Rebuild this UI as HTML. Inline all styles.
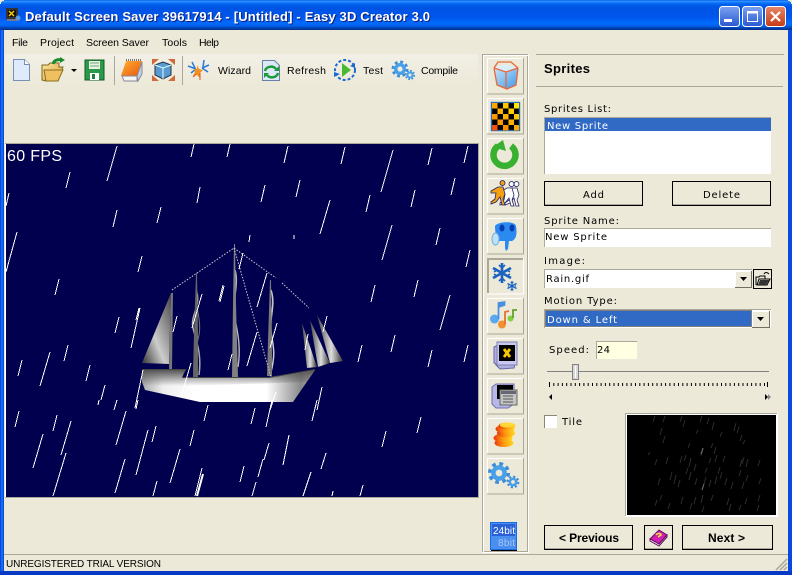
<!DOCTYPE html>
<html><head><meta charset="utf-8"><style>
html,body{margin:0;padding:0;width:792px;height:575px;overflow:hidden;background:#ece9d8}
svg{display:block;position:absolute;left:0;top:0}
text{font-family:"Liberation Sans",sans-serif;font-size:10.5px;fill:#000}
text.d{font-family:"DejaVu Sans",sans-serif;font-size:10px}
.b{font-weight:bold}
text.w{fill:#fff}
</style></head><body>
<svg width="792" height="575" viewBox="0 0 792 575" xmlns="http://www.w3.org/2000/svg">
<defs>
<linearGradient id="tb" x1="0" y1="0" x2="0" y2="1">
<stop offset="0" stop-color="#0058ee"/><stop offset=".04" stop-color="#3593ff"/><stop offset=".08" stop-color="#127dff"/><stop offset=".14" stop-color="#0262ee"/><stop offset=".24" stop-color="#0054e3"/><stop offset=".56" stop-color="#0055eb"/><stop offset=".76" stop-color="#026afe"/><stop offset=".86" stop-color="#0062ef"/><stop offset=".94" stop-color="#0040ab"/><stop offset="1" stop-color="#003092"/>
</linearGradient>
<linearGradient id="hull" x1="0" y1="0" x2="1" y2="0"><stop offset="0" stop-color="#aaa"/><stop offset=".12" stop-color="#eee"/><stop offset=".3" stop-color="#fff"/><stop offset=".72" stop-color="#fff"/><stop offset=".92" stop-color="#888"/><stop offset="1" stop-color="#bbb"/></linearGradient>
<linearGradient id="deck" x1="0" y1="0" x2="0" y2="1"><stop offset="0" stop-color="#555"/><stop offset="1" stop-color="#555" stop-opacity="0"/></linearGradient>
<linearGradient id="sl" x1="0" y1="1" x2="1" y2="0"><stop offset="0" stop-color="#333"/><stop offset=".4" stop-color="#ccc"/><stop offset="1" stop-color="#444"/></linearGradient>
<linearGradient id="sr" x1="0" y1="0" x2="1" y2="0"><stop offset="0" stop-color="#444"/><stop offset=".55" stop-color="#ddd"/><stop offset="1" stop-color="#333"/></linearGradient>
<linearGradient id="tool" x1="0" y1="0" x2="0" y2="1"><stop offset="0" stop-color="#f2f0e6"/><stop offset="1" stop-color="#ece9d8"/></linearGradient>
<linearGradient id="blu" x1="0" y1="0" x2="1" y2="1"><stop offset="0" stop-color="#c8e6fa"/><stop offset="1" stop-color="#3a96ea"/></linearGradient>
<linearGradient id="org" x1="0" y1="0" x2="1" y2="1"><stop offset="0" stop-color="#ffb030"/><stop offset="1" stop-color="#e85810"/></linearGradient>
<linearGradient id="coin" x1="0" y1="0" x2="1" y2="0"><stop offset="0" stop-color="#e83808"/><stop offset=".5" stop-color="#ff9a10"/><stop offset="1" stop-color="#ffd820"/></linearGradient>
<linearGradient id="btnb" x1="0" y1="0" x2="0" y2="1"><stop offset="0" stop-color="#7ba2f0"/><stop offset="1" stop-color="#2a58d0"/></linearGradient>
<linearGradient id="btnr" x1="0" y1="0" x2="0" y2="1"><stop offset="0" stop-color="#e8866a"/><stop offset="1" stop-color="#c43a12"/></linearGradient>
<linearGradient id="fol" x1="0" y1="0" x2="1" y2="1"><stop offset="0" stop-color="#ffe8a0"/><stop offset="1" stop-color="#d89830"/></linearGradient>
<g id="gear"><circle r="7" fill="none" stroke="#3a8ed8" stroke-width="3" stroke-dasharray="2.8 2.7"/><circle r="4.300" fill="none" stroke="#4aa0e8" stroke-width="3.400"/></g>
<g id="flake" stroke="#1a64c0" stroke-width="2.600" fill="none"><path d="M0-10V10M-9-5 9 5M-9 5 9-5"/><path stroke-width="1.600" d="M-3-8 0-5 3-8M-3 8 0 5 3 8M-8-1-5-3-8-5M8-1 5-3 8-5M-8 1-5 3-8 5M8 1 5 3 8 5"/></g>
<path id="man" d="M0 0a2.500 2.500 0 1 1 0 .1zM-2 4l5 0 2 7-2 5 2 6h-3l-2-8-4 5-5 2 0-2 4-3 1-6-5 0 0-2z"/>
</defs>

<!-- frame -->
<rect width="792" height="575" fill="#0a3cd0"/>
<rect x="0" y="0" width="792" height="30" fill="url(#tb)"/>
<path d="M0 0h4v1h-2v1h-1v2h-1zM792 0h-4v1h2v1h1v2h1z" fill="#ece9d8"/>
<rect x="0" y="30" width="4" height="545" fill="#0849df"/>
<rect x="1" y="30" width="2" height="545" fill="#166aee"/>
<rect x="788" y="30" width="4" height="545" fill="#0849df"/>
<rect x="0" y="571" width="792" height="4" fill="#0839c4"/>
<rect x="4" y="30" width="784" height="541" fill="#ece9d8"/>

<!-- title icon -->
<rect x="6" y="8" width="12" height="11" fill="#333"/><rect x="8" y="10" width="8" height="7" fill="#111"/>
<path d="M9 11l5 5M14 11l-5 5" stroke="#ffd000" stroke-width="1.400"/>
<rect x="7" y="19" width="12" height="2" fill="#778"/><circle cx="18" cy="18" r="2.500" fill="#5a9ae0"/>
<text x="26" y="22" class="b" style="font-size:13px;fill:#0f1e78" textLength="405" lengthAdjust="spacing">Default Screen Saver 39617914 - [Untitled] - Easy 3D Creator 3.0</text>
<text x="25" y="21" class="b w" style="font-size:13px" textLength="405" lengthAdjust="spacing">Default Screen Saver 39617914 - [Untitled] - Easy 3D Creator 3.0</text>

<!-- window buttons -->
<rect x="719.500" y="6.500" width="20" height="20" rx="3" fill="url(#btnb)" stroke="#fff"/>
<rect x="724" y="19" width="8" height="3" fill="#fff"/>
<rect x="742.500" y="6.500" width="20" height="20" rx="3" fill="url(#btnb)" stroke="#fff"/>
<rect x="747.500" y="12.500" width="10" height="9" fill="none" stroke="#fff"/><rect x="747" y="11" width="11" height="2.500" fill="#fff"/>
<rect x="765.500" y="6.500" width="20" height="20" rx="3" fill="url(#btnr)" stroke="#fff"/>
<path d="M771 12l9 9M780 12l-9 9" stroke="#fff" stroke-width="2.200"/>

<!-- menu -->
<text x="12" y="46" textLength="16" lengthAdjust="spacing">File</text>
<text x="40" y="46" textLength="34" lengthAdjust="spacing">Project</text>
<text x="86" y="46" textLength="63" lengthAdjust="spacing">Screen Saver</text>
<text x="162" y="46" textLength="25" lengthAdjust="spacing">Tools</text>
<text x="199" y="46" textLength="20" lengthAdjust="spacing">Help</text>

<!-- toolbar -->
<rect x="5" y="54" width="473" height="32" rx="2" fill="url(#tool)"/>
<rect x="114" y="56" width="1" height="29" fill="#aca899"/>
<rect x="182" y="56" width="1" height="29" fill="#aca899"/>
<!-- new -->
<path d="M13.500 59.500h11l5 5v16h-16z" fill="#dfeafc" stroke="#7890b8"/><path d="M24.500 59.500v5h5" fill="#fff" stroke="#7890b8"/>
<!-- open -->
<path d="M42 65h6l2-2h9v4l4 0-5 14H46l-4-1z" fill="url(#fol)" stroke="#7a6a20"/>
<path d="M44 70h19l-5 11H46z" fill="#f0c060" stroke="#8a7020"/>
<path d="M53 64c1-4 5-5 9-4" stroke="#1a8a30" stroke-width="3" fill="none"/><path d="M60 57l5 3-5 3z" fill="#1a8a30"/>
<path d="M71 69h6l-3 3z" fill="#000"/>
<!-- save -->
<rect x="85" y="60" width="19" height="20" fill="#2a9a4a" stroke="#105a24"/><rect x="89" y="61" width="11" height="8" fill="#e8f4e0"/><path d="M90 63h9M90 66h9" stroke="#70a880"/><rect x="90" y="73" width="9" height="7" fill="#fff"/><rect x="92" y="74" width="3" height="5" fill="#2a7a40"/>
<!-- book -->
<path d="M126 61h16l-5 15h-16z" fill="url(#org)"/><path d="M126 60h16" stroke="#777" stroke-dasharray="1 1" stroke-width="2"/><path d="M122 76h15v5h-13z" fill="#f4f4f4" stroke="#889"/><path d="M137 76l5-14v12l-4 7z" fill="#c8d0e4" stroke="#889"/>
<!-- cube tool -->
<path d="M152 59h7l-7 6zM175 59h-7l7 6zM152 81h7l-7-6zM175 81h-7l7-6z" fill="#d0683a"/><path d="M155 65l8-3 8 3v10l-8 4-8-4z" fill="#5a9ad0" stroke="#234"/><path d="M155 65l8 3 8-3M163 68v11" stroke="#dff" fill="none"/>
<!-- wizard -->
<g stroke="#2a7ad8" fill="none" stroke-width="1.500"><path d="M188 66l8 3M192 62l3 6M191 73l5-4"/><path d="M209 65l-7 3M204 60l-1 7M208 72l-6-4"/></g>
<path d="M197 65l2 4 4 1-3 3 0 5-3-3-4 1 2-4-1-3 3 0z" fill="#f09020"/>
<path d="M200 73v7M196 74l-3 3" stroke="#e05020"/>
<text x="218" y="74" textLength="33" lengthAdjust="spacing">Wizard</text>
<!-- refresh -->
<path d="M262.500 60.500h12l5 5v15h-17z" fill="#dde8f6" stroke="#6880a8"/>
<path d="M265 71a6 5 0 0 1 11-2" fill="none" stroke="#1a9a3a" stroke-width="2.500"/><path d="M278 73a6 5 0 0 1-11 2" fill="none" stroke="#1a9a3a" stroke-width="2.500"/>
<path d="M274 71h5v-5zM269 73h-5v5z" fill="#1a9a3a"/>
<text x="287" y="74" textLength="39" lengthAdjust="spacing">Refresh</text>
<!-- test -->
<circle cx="345" cy="70" r="10" fill="none" stroke="#1a68d0" stroke-width="2" stroke-dasharray="3 2"/>
<path d="M342 63l9 7-9 7z" fill="#4ab830"/>
<path d="M350 66l5-3v5zM340 74l-6 3v-5z" fill="#1a68d0"/>
<text x="363" y="74" textLength="20" lengthAdjust="spacing">Test</text>
<!-- compile -->
<use href="#gear" transform="translate(400,69)"/><use href="#gear" transform="translate(410,75) scale(.6)"/>
<text x="421" y="74" textLength="37" lengthAdjust="spacing">Compile</text>

<!-- canvas -->
<rect x="5" y="143" width="474" height="355" fill="#fff"/>
<rect x="5" y="143" width="473" height="1" fill="#aca899"/>
<rect x="478" y="143" width="1" height="354" fill="#aca899"/>
<rect x="5" y="497" width="474" height="1" fill="#aca899"/>
<rect x="6" y="144" width="472" height="353" fill="#00004f"/>

<!-- ship -->
<g>
<path d="M171 293 142 363l27 1z" fill="url(#sl)"/>
<path d="M302 323 307 368 317 367z" fill="url(#sr)"/>
<path d="M310 320 318 367 330 363z" fill="url(#sr)"/>
<path d="M317 315 330 363 343 361z" fill="url(#sr)"/>
<g stroke="#aaa" fill="none" stroke-width="1"><path d="M196 290c6 15 -6 25 -3 38s9 25 6 47" stroke-width="1.500"/><path d="M197 290c-3 15 5 30 2 45s-6 20 -5 38" stroke="#777"/><path d="M235 270c4 12-2 30-1 42s8 30 4 55" stroke-width="1.400" stroke="#bbb"/><path d="M271 290c5 15-2 28 0 42s5 20 0 40" stroke="#ccc" stroke-width="1.500"/></g>
<path d="M171 293h2l-1 77h-3z" fill="#777"/>
<path d="M196 273h1l1 60v44h-5l1-44z" fill="#666"/>
<path d="M234 244h1l1 60 2 73h-6l1-73z" fill="#808080"/>
<path d="M270 280h1l1 60v36h-5l1-36z" fill="#777"/>
<g stroke="#ccc" fill="none" stroke-dasharray="1.500 1.500"><path d="M172 290 234 248 276 278"/><path d="M282 283 309 308"/><path d="M234 248 271 377"/></g>
<path d="M142 370l43 0-3 8 88-1 45-7-22 32H200l-55-12-3-8z" fill="url(#hull)"/>
<path d="M142 370h43l-3 8v8h-40zM182 378h88l45-8-8 12-125 4z" fill="url(#deck)"/>
<path d="M142 369h44v1l-4 7h88l45-8v1l-45 8h-88l3-8h-43z" fill="#444"/>
</g>

<!-- rain -->
<path shape-rendering="crispEdges" stroke="#fff" stroke-width="1" fill="none" d="
M117 146 107 181M70 172 66 188M9 193 6 206M194 144 191 157M230 144 227 157M200 187 197 203M117 210 113 227M161 207 157 223M17 232 6 272M142 256 138 272M59 279 55 295M223 285 219 301M139 308 136 320M119 317 115 333M177 316 173 332
M19 411 15 427M57 415 53 431M71 421 61 455M43 434 33 468M66 453 53 496M126 411 116 445M148 430 136 475M156 426 152 442M125 459 115 493M157 481 153 496M194 430 190 446M180 449 170 483M202 468 195 496M208 405 204 421M255 408 251 424M244 466 240 482M263 459 258 477M256 482 252 496M117 400 114 410M99 400 98 405M138 400 136 409
M272 400 266 427M317 400 312 421M421 417 417 433M386 431 382 447M289 435 283 465M269 443 264 460M326 453 321 469M311 472 303 496M333 491 332 496M363 485 360 496
M250 235 249 242M294 235 294 239M243 253 239 269M224 286 220 302M267 273 257 307M202 294 192 328M140 308 131 348M327 316 323 332M257 332 247 366M277 323 270 348M232 354 228 370M191 363 181 397M143 370 135 408M322 387 317 410M276 392 270 410M308 334 305 350
M68 345 64 361M50 352 40 386M22 360 18 376M90 365 86 381M105 385 101 400
M288 146 284 163M345 147 341 164M393 150 381 192M432 148 428 165M468 146 464 163M300 180 296 197M265 185 261 202M330 200 320 234M370 195 366 212M415 190 411 207M455 178 451 195M392 225 382 260M440 228 436 245M470 250 466 267M418 280 414 297M375 285 371 302M450 295 440 330M395 335 391 352M362 345 358 362M432 350 428 367M468 345 464 362"/>
<path d="M203 474 197 496" stroke="#fff" stroke-width="2"/>
<text x="7" y="161" class="w" style="font-size:16px" textLength="55" lengthAdjust="spacing">60 FPS</text>

<!-- sidebar box -->
<path d="M482.500 54.500h45v497h-45z" fill="none" stroke="#aca899"/>
<path d="M483.500 55.500h45v497h-45z" fill="none" stroke="#fff"/>
<rect x="482" y="54" width="46" height="1" fill="#aca899"/>
<!-- sidebar buttons -->
<g stroke-width="1" fill="none">
<path d="M487.500 93V58.500H523" stroke="#fff"/><path d="M523.500 58v36H487" stroke="#aca899"/>
<path d="M487.500 133V98.500H523" stroke="#fff"/><path d="M523.500 98v36H487" stroke="#aca899"/>
<path d="M487.500 173V138.500H523" stroke="#fff"/><path d="M523.500 138v36H487" stroke="#aca899"/>
<path d="M487.500 213V178.500H523" stroke="#fff"/><path d="M523.500 178v36H487" stroke="#aca899"/>
<path d="M487.500 253V218.500H523" stroke="#fff"/><path d="M523.500 218v36H487" stroke="#aca899"/>
<path d="M488 293V259H523" stroke="#aca899" stroke-width="2"/><path d="M523.500 258v36H487" stroke="#fff"/>
<path d="M487.500 333V298.500H523" stroke="#fff"/><path d="M523.500 298v36H487" stroke="#aca899"/>
<path d="M487.500 373V338.500H523" stroke="#fff"/><path d="M523.500 338v36H487" stroke="#aca899"/>
<path d="M487.500 413V378.500H523" stroke="#fff"/><path d="M523.500 378v36H487" stroke="#aca899"/>
<path d="M487.500 453V418.500H523" stroke="#fff"/><path d="M523.500 418v36H487" stroke="#aca899"/>
<path d="M487.500 493V458.500H523" stroke="#fff"/><path d="M523.500 458v36H487" stroke="#aca899"/>
</g>
<!-- cube icon -->
<path d="M494 68l12 4 12-4-2 17-9 4-10-4z" fill="url(#blu)"/><path d="M494 68l12-3 12 3-12 4z" fill="#d8eefc"/>
<path d="M494 68l3 17 10 4 9-4 2-17M494 68l4-6h13l7 6M494 68l12 4 12-4M506 72v17" stroke="#e8683a" stroke-width="1.300" fill="none"/>
<!-- checker -->
<rect x="491.500" y="102.500" width="28" height="28" fill="#000" stroke="#2a6ab0" stroke-width="1.400"/>
<g>
<rect x="492" y="103" width="5.500" height="5.500" fill="#ffa800"/><rect x="503" y="103" width="5.500" height="5.500" fill="#ffc800"/><rect x="514" y="103" width="5" height="5.500" fill="#ffe800"/>
<rect x="497.500" y="108.500" width="5.500" height="5.500" fill="#ffb000"/><rect x="508.500" y="108.500" width="5.500" height="5.500" fill="#ffd000"/>
<rect x="492" y="114" width="5.500" height="5.500" fill="#ff9800"/><rect x="503" y="114" width="5.500" height="5.500" fill="#ffb000"/><rect x="514" y="114" width="5" height="5.500" fill="#ffc800"/>
<rect x="497.500" y="119.500" width="5.500" height="5.500" fill="#ff9800"/><rect x="508.500" y="119.500" width="5.500" height="5.500" fill="#ffb000"/>
<rect x="492" y="125" width="5.500" height="5.500" fill="#f05010"/><rect x="503" y="125" width="5.500" height="5.500" fill="#ff9000"/><rect x="514" y="125" width="5" height="5.500" fill="#ffa800"/>
</g>
<!-- green arrow -->
<path d="M498 146a11 11 0 1 0 13 0" fill="none" stroke="#38b030" stroke-width="6.500"/>
<path d="M493 147l10-7 3 11z" fill="#38b030"/>
<!-- runner -->
<use href="#man" transform="translate(514,184)" fill="#fff" stroke="#226" stroke-width=".8"/>
<use href="#man" transform="translate(509,184)" fill="#fff" stroke="#226" stroke-width=".8"/>
<use href="#man" transform="translate(500,183)" fill="#f5a010" stroke="#226" stroke-width=".8"/>
<!-- ghost -->
<path d="M495 226c3-5 20-5 21 0 1 6 1 13-4 15l-3 0-1 8-2 2-1-3 0-7-6 0c-3-3-4-10-4-15z" fill="#2a8af0"/>
<ellipse cx="495.500" cy="239" rx="3.500" ry="6" fill="#bfe2f8" stroke="#70b0e0"/>
<ellipse cx="502" cy="228" rx="2.500" ry="3.500" fill="#0a3ab0"/><ellipse cx="512" cy="228" rx="2.500" ry="3.500" fill="#0a3ab0"/>
<!-- snowflake -->
<use href="#flake" transform="translate(502,273)"/><use href="#flake" transform="translate(512,286) scale(.5)"/>
<!-- music -->
<circle cx="494.500" cy="319" r="4.500" fill="#5aa8f0"/><path d="M498.500 319v-16l6-1v3l-6 2" stroke="#4a90e0" stroke-width="1.800" fill="#4a90e0"/>
<circle cx="502" cy="324.500" r="4" fill="#f09030"/><path d="M505 324v-12l4-1" stroke="#e87030" stroke-width="1.800" fill="none"/>
<circle cx="510.500" cy="318.500" r="3" fill="#80d040"/><path d="M513 318v-8l4 0" stroke="#60a030" stroke-width="1.800" fill="none"/>
<!-- monitor -->
<path d="M494 347l4-2v20l-4-2zM496 365l4 4 14-1 1-4z" fill="#b0b0e0" stroke="#6868a8"/>
<rect x="497" y="342" width="20" height="23" fill="#c8c8f0" stroke="#8080b0"/>
<rect x="499" y="345" width="16" height="16" fill="#000"/>
<path d="M504 349l6 8M510 349l-6 8" stroke="#f8c800" stroke-width="2.800"/>
<!-- window monitor -->
<path d="M492 387l4-3h18v20l-6 4h-12l-4-4z" fill="#b8b8e8" stroke="#7070a8"/><rect x="497" y="385" width="16" height="14" fill="#000"/>
<rect x="500" y="390" width="17" height="15" fill="#c4c4c4" stroke="#666"/><rect x="501" y="391" width="15" height="3" fill="#667"/><path d="M503 396h10M503 399h10M503 402h10" stroke="#555"/>
<!-- coins -->
<g fill="url(#coin)">
<ellipse cx="504" cy="443" rx="9.500" ry="4"/><ellipse cx="503" cy="438" rx="9.500" ry="4.500"/><ellipse cx="506" cy="433" rx="9" ry="4.500"/><ellipse cx="505" cy="429" rx="9.500" ry="4"/><ellipse cx="507" cy="426" rx="8.500" ry="3.500"/>
</g>
<ellipse cx="507" cy="425" rx="7" ry="2.500" fill="#ffd838"/>
<!-- gears side -->
<use href="#gear" transform="translate(499,473) scale(1.300)"/><use href="#gear" transform="translate(513,482) scale(.75)"/>
<!-- 24bit -->
<rect x="490.500" y="522.500" width="26" height="27" fill="#4a8ef0" stroke="#1a6ae0"/>
<rect x="492" y="524" width="23" height="12" fill="#2a60d8"/>
<rect x="491" y="550" width="26" height="1" fill="#000"/>
<text x="493" y="534" class="w" style="font-size:10px" textLength="22" lengthAdjust="spacing">24bit</text>
<text x="498" y="546" style="font-size:10px;fill:#a8c8f4" textLength="17" lengthAdjust="spacing">8bit</text>

<!-- right panel -->
<rect x="536" y="54" width="248" height="1" fill="#aca899"/>
<rect x="536" y="86" width="247" height="1" fill="#aca899"/>
<text x="544" y="73" class="b" style="font-size:13px" textLength="46" lengthAdjust="spacing">Sprites</text>
<text x="544" y="112" class="d" textLength="67" lengthAdjust="spacing">Sprites List:</text>
<rect x="544" y="117" width="227" height="57" fill="#fff"/><path d="M544.500 174V117.500H771" stroke="#aca899" fill="none"/>
<rect x="545" y="118" width="226" height="13" fill="#316ac5"/>
<text x="547" y="129" class="d w" textLength="61" lengthAdjust="spacing">New Sprite</text>

<rect x="544.500" y="181.500" width="98" height="24" fill="#ece9d8" stroke="#000"/><rect x="545" y="204" width="97" height="1" fill="#aca899"/>
<text x="583" y="198" class="d" textLength="21" lengthAdjust="spacing">Add</text>
<rect x="672.500" y="181.500" width="98" height="24" fill="#ece9d8" stroke="#000"/><rect x="673" y="204" width="97" height="1" fill="#aca899"/>
<text x="703" y="198" class="d" textLength="37" lengthAdjust="spacing">Delete</text>

<text x="544" y="224" class="d" textLength="75" lengthAdjust="spacing">Sprite Name:</text>
<rect x="544" y="228" width="227" height="19" fill="#fff"/><path d="M544.500 247V228.500H771" stroke="#aca899" fill="none"/>
<text x="545" y="240" class="d" textLength="62" lengthAdjust="spacing">New Sprite</text>

<text x="544" y="264" class="d" textLength="41" lengthAdjust="spacing">Image:</text>
<rect x="544" y="269" width="208" height="19" fill="#fff"/><path d="M544.500 288V269.500H752" stroke="#aca899" fill="none"/>
<text x="546" y="282" class="d" textLength="43" lengthAdjust="spacing">Rain.gif</text>
<rect x="735" y="271" width="16" height="16" fill="#ece9d8"/><path d="M735.500 287V271.500H751" stroke="#fff" fill="none"/><path d="M751.500 271v16.500H735" stroke="#716f64" fill="none"/>
<path d="M740 277h7l-3.500 4z" fill="#000"/>
<rect x="753.500" y="269.500" width="18" height="19" fill="#ece9d8" stroke="#000"/>
<path d="M756 285v-8h3l1-1h5v3h-6l-2 6h10l3-6h-5" fill="#ece9d8" stroke="#000"/><path d="M758 285l2-5h9l-3 5z" fill="#333"/><path d="M764 274c1-2 3-2 5 0" stroke="#000" fill="none"/>

<text x="544" y="304" class="d" textLength="73" lengthAdjust="spacing">Motion Type:</text>
<rect x="544" y="309" width="227" height="19" fill="#fff"/><path d="M544.500 328V309.500H771" stroke="#aca899" fill="none"/>
<rect x="546" y="311" width="205" height="15" fill="#316ac5"/><rect x="545.500" y="310.500" width="206" height="16" fill="none" stroke="#000" stroke-dasharray="1 1"/>
<text x="547" y="323" class="d w" textLength="70" lengthAdjust="spacing">Down &amp; Left</text>
<rect x="752" y="311" width="17" height="16" fill="#ece9d8"/><path d="M752.500 327V311.500H769" stroke="#fff" fill="none"/><path d="M769.500 311v16.500H752" stroke="#716f64" fill="none"/>
<path d="M757 317h7l-3.500 4z" fill="#000"/>

<text x="549" y="353" class="d" textLength="40" lengthAdjust="spacing">Speed:</text>
<rect x="596" y="341" width="41" height="18" fill="#ffffe1"/><path d="M596.500 359V341.500H637" stroke="#aca899" fill="none"/>
<text x="597" y="353" class="d" textLength="13" lengthAdjust="spacing">24</text>

<rect x="547" y="371" width="222" height="1" fill="#808080"/>
<rect x="572.500" y="364.500" width="6" height="15" fill="#d8d8d8" stroke="#808080"/><rect x="575" y="366" width="1" height="12" fill="#fff"/>
<path d="M549.500 382v5M767.500 382v5" stroke="#000"/>
<path d="M549 384.500H768" stroke="#000" stroke-width="3" stroke-dasharray="1 3.300"/>
<path d="M552 394v6l-3-3z" fill="#000"/><path d="M765 394v6l3-3z" fill="#000"/><path d="M768 394v6l3-3z" fill="#888"/>

<rect x="544" y="415" width="13" height="13" fill="#fff"/><path d="M544.500 428V415.500H557" stroke="#8a8778" fill="none"/>
<text x="562" y="425" class="d" textLength="20" lengthAdjust="spacing">Tile</text>

<rect x="625" y="413" width="153" height="104" fill="#fff"/><path d="M625.500 516V413.500H777" stroke="#aca899" fill="none"/>
<rect x="627" y="415" width="149" height="100" fill="#000"/>
<path stroke="#2c2c2c" fill="none" d="M655 416l-2 6M665 416l-2 6M682 416l-2 6M702 416l-2 6M709 418l-2 6M685 420l-2 7M714 422l-2 8M736 423l-2 8M739 427l-2 6M662 428l-2 7M665 436l-2 7M650 452l-2 3M698 430l-2 4M722 432l-2 5M745 440l-2 4M742 435l-2 6M690 443l-2 5M713 443l-2 5M716 447l-2 7M703 448l-2 8M686 455l-2 6M668 457l-2 7M657 459l-2 6M682 456l-2 7M691 458l-2 9M711 458l-2 5M717 455l-2 7M744 457l-2 7M742 459l-2 8M748 459l-2 8M725 456l-2 6M688 468l-2 6M696 464l-2 7M707 468l-2 5M720 467l-2 7M741 470l-2 6M760 460l-2 6M660 478l-2 7M672 472l-2 8M676 475l-2 9M691 472l-2 8M706 477l-2 7M717 476l-2 8M722 472l-2 7M727 478l-2 7M748 475l-2 6M680 480l-2 7M697 478l-2 7M711 480l-2 7M733 482l-2 7M744 482l-2 7M761 478l-2 6M662 495l-2 5M683 497l-2 7M696 497l-2 7M703 495l-2 8M713 495l-2 6M729 498l-2 7M747 498l-2 6M760 495l-2 6M657 500l-2 6M670 503l-2 6M692 503l-2 6M704 506l-2 6M731 504l-2 7M741 505l-2 5M759 505l-2 6"/>
<path d="M704 484l-2 6M703 448l-2 6" stroke="#777"/>

<rect x="544.500" y="525.500" width="88" height="24" fill="#ece9d8" stroke="#000"/><rect x="545" y="548" width="87" height="1" fill="#aca899"/>
<text x="559" y="542" class="b" style="font-size:12px" textLength="60" lengthAdjust="spacing">&lt; Previous</text>
<rect x="644.500" y="525.500" width="28" height="24" fill="#ece9d8" stroke="#000"/><rect x="645" y="548" width="27" height="1" fill="#aca899"/>
<path d="M650 539l9-9 8 5-8 9z" fill="#d020b0" stroke="#601060"/><path d="M650 539v2l9 5 8-9v-2l-8 9z" fill="#f0e0f0" stroke="#601060"/>
<path d="M656 535c1-2 5-2 5 0l-3 2" stroke="#ffe040" stroke-width="1.500" fill="none"/>
<rect x="682.500" y="525.500" width="90" height="24" fill="#ece9d8" stroke="#000"/><rect x="683" y="548" width="89" height="1" fill="#aca899"/>
<text x="708" y="542" class="b" style="font-size:12px" textLength="37" lengthAdjust="spacing">Next &gt;</text>

<!-- status bar -->
<rect x="4" y="554" width="784" height="1" fill="#aca899"/>
<text x="6" y="567" style="font-size:10px" textLength="155" lengthAdjust="spacing">UNREGISTERED TRIAL VERSION</text>
<path d="M776 570l11-11M780 570l7-7M784 570l3-3" stroke="#aca899" stroke-width="1.500"/>
</svg>
</body></html>
